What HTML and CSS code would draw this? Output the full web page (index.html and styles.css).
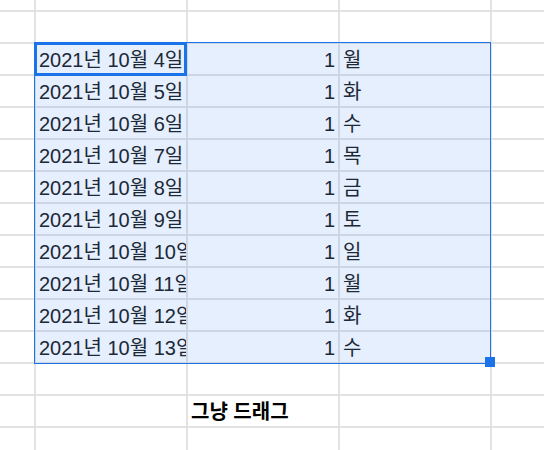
FILE: index.html
```html
<!DOCTYPE html>
<html lang="ko">
<head>
<meta charset="utf-8">
<title>Sheet</title>
<link rel="stylesheet" href="styles.css">
</head>
<body>
<div class="sheet">
  <div class="grid">
    <div class="c"></div><div class="c"></div><div class="c"></div><div class="c"></div><div class="c"></div>
    <div class="c"></div><div class="c"></div><div class="c"></div><div class="c"></div><div class="c"></div>

    <div class="c"></div><div class="c txt">2021년 10월 4일</div><div class="c num">1</div><div class="c txt">월</div><div class="c"></div>
    <div class="c"></div><div class="c txt">2021년 10월 5일</div><div class="c num">1</div><div class="c txt">화</div><div class="c"></div>
    <div class="c"></div><div class="c txt">2021년 10월 6일</div><div class="c num">1</div><div class="c txt">수</div><div class="c"></div>
    <div class="c"></div><div class="c txt">2021년 10월 7일</div><div class="c num">1</div><div class="c txt">목</div><div class="c"></div>
    <div class="c"></div><div class="c txt">2021년 10월 8일</div><div class="c num">1</div><div class="c txt">금</div><div class="c"></div>
    <div class="c"></div><div class="c txt">2021년 10월 9일</div><div class="c num">1</div><div class="c txt">토</div><div class="c"></div>
    <div class="c"></div><div class="c txt">2021년 10월 10일</div><div class="c num">1</div><div class="c txt">일</div><div class="c"></div>
    <div class="c"></div><div class="c txt">2021년 10월 11일</div><div class="c num">1</div><div class="c txt">월</div><div class="c"></div>
    <div class="c"></div><div class="c txt">2021년 10월 12일</div><div class="c num">1</div><div class="c txt">화</div><div class="c"></div>
    <div class="c"></div><div class="c txt">2021년 10월 13일</div><div class="c num">1</div><div class="c txt">수</div><div class="c"></div>

    <div class="c"></div><div class="c"></div><div class="c"></div><div class="c"></div><div class="c"></div>
    <div class="c"></div><div class="c"></div><div class="c txt bold">그냥 드래그</div><div class="c"></div><div class="c"></div>
    <div class="c"></div><div class="c"></div><div class="c"></div><div class="c"></div><div class="c"></div>
  </div>
  <div class="selection"></div>
  <div class="active"></div>
  <div class="handle"></div>
</div>
</body>
</html>
```
FILE: styles.css
```css
html, body {
  margin: 0;
  padding: 0;
  background: #ffffff;
}
body {
  width: 544px;
  height: 450px;
  overflow: hidden;
}
.sheet {
  position: relative;
  width: 544px;
  height: 450px;
  overflow: hidden;
}
.grid {
  display: grid;
  grid-template-columns: 34px 150px 150px 150px 60px;
  grid-template-rows: 10px repeat(14, 30px);
  gap: 2px;
  background: #e2e2e2;
  width: 560px;
  font-family: "Liberation Sans", Arial, "Noto Sans CJK KR", sans-serif;
  font-size: 20px;
  color: #222222;
}
.c {
  background: #ffffff;
  overflow: hidden;
  white-space: nowrap;
  line-height: 30px;
}
.txt {
  padding: 1px 3px 0 3px;
}
.num {
  padding: 1px 3px 0 3px;
  text-align: right;
}
.bold {
  font-weight: bold;
  color: #000000;
}
.selection {
  position: absolute;
  left: 34px;
  top: 42px;
  width: 457px;
  height: 322px;
  box-sizing: border-box;
  border: 1px solid #1a73e8;
  background: rgba(14, 101, 235, 0.1);
}
.active {
  position: absolute;
  left: 34px;
  top: 42px;
  width: 153px;
  height: 34px;
  box-sizing: border-box;
  border: 3px solid #1a73e8;
}
.handle {
  position: absolute;
  left: 485px;
  top: 357px;
  width: 10px;
  height: 10px;
  background: #1a73e8;
}
```
